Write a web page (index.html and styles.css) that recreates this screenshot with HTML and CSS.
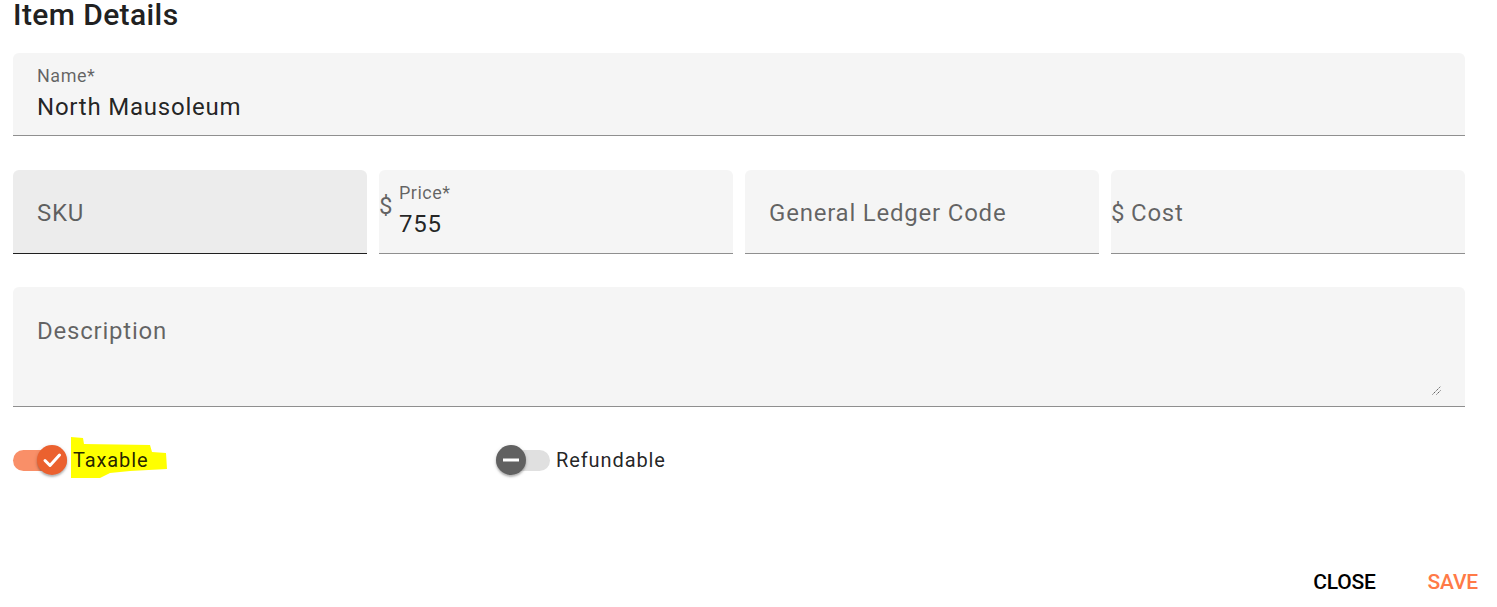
FILE: index.html
```html
<!DOCTYPE html>
<html lang="en">
<head>
<meta charset="utf-8">
<title>Item Details</title>
<link rel="stylesheet" href="styles.css">
</head>
<body>
<div class="dialog">
  <h2 class="title">Item Details</h2>
  <div class="form">
    <div class="field field-name">
      <div class="field-body">
        <div class="label-float">Name*</div>
        <div class="value">North Mausoleum</div>
      </div>
    </div>

    <div class="row4">
      <div class="field field-sku field-hover">
        <div class="field-body">
          <div class="label-rest">SKU</div>
        </div>
      </div>
      <div class="field field-prefixed">
        <span class="prefix prefix-up">$</span>
        <div class="field-body">
          <div class="label-float">Price*</div>
          <div class="value">755</div>
        </div>
      </div>
      <div class="field">
        <div class="field-body">
          <div class="label-rest">General Ledger Code</div>
        </div>
      </div>
      <div class="field field-prefixed">
        <span class="prefix">$</span>
        <div class="field-body">
          <div class="label-rest">Cost</div>
        </div>
      </div>
    </div>

    <div class="field field-desc">
      <div class="field-body">
        <div class="label-rest desc-label">Description</div>
      </div>
      <svg class="grip" width="9" height="9" viewBox="0 0 9 9">
        <path d="M0.5 8.5 L8.5 0.5 M4.5 8.5 L8.5 4.5" stroke="#555" stroke-width="1" stroke-dasharray="1.4 0.8" fill="none"/>
      </svg>
    </div>

    <div class="switches">
      <div class="switch-item">
        <div class="switch switch-on">
          <span class="track"></span>
          <span class="thumb">
            <svg width="30" height="30" viewBox="0 0 30 30">
              <path d="M8 15.5 L13 20.5 L22.5 10" stroke="#fff" stroke-width="3" fill="none" stroke-linecap="round" stroke-linejoin="round"/>
            </svg>
          </span>
        </div>
        <span class="switch-label highlighted">Taxable</span>
      </div>
      <div class="switch-item">
        <div class="switch switch-off">
          <span class="track"></span>
          <span class="thumb">
            <svg width="30" height="30" viewBox="0 0 30 30">
              <path d="M7 15 L23 15" stroke="#fff" stroke-width="3" fill="none"/>
            </svg>
          </span>
        </div>
        <span class="switch-label">Refundable</span>
      </div>
    </div>
  </div>

  <div class="actions">
    <button class="btn btn-close">Close</button>
    <button class="btn btn-save">Save</button>
  </div>
</div>
</body>
</html>
```

FILE: styles.css
```css
html, body {
  margin: 0;
  padding: 0;
  background: #ffffff;
  overflow: hidden;
}

body {
  font-family: Roboto, "Liberation Sans", Arial, sans-serif;
  color: rgba(0, 0, 0, 0.87);
}

.dialog {
  width: 1497px;
  height: 607px;
  display: flex;
  flex-direction: column;
}

.title {
  margin: 0;
  padding-left: 13px;
  font-size: 30px;
  line-height: 29px;
  font-weight: 500;
  letter-spacing: 0.4px;
  color: #212121;
}

.form {
  width: 1452px;
  margin-left: 13px;
  margin-top: 24px;
  display: flex;
  flex-direction: column;
}

.field {
  position: relative;
  box-sizing: border-box;
  background: #f5f5f5;
  border-radius: 6px 6px 0 0;
  border-bottom: 1px solid #8f8f8f;
  display: flex;
  align-items: flex-start;
}

.field-body {
  padding-left: 24px;
  padding-top: 14px;
  display: flex;
  flex-direction: column;
  flex: 1;
  min-width: 0;
}

.field-name {
  height: 83px;
}

.label-float {
  font-size: 18px;
  line-height: 18px;
  color: rgba(0, 0, 0, 0.6);
  letter-spacing: 0.5px;
}

.value {
  margin-top: 10px;
  font-size: 24px;
  line-height: 24px;
  letter-spacing: 0.78px;
  color: rgba(0, 0, 0, 0.87);
}

.label-rest {
  margin-top: 17px;
  font-size: 24px;
  line-height: 24px;
  letter-spacing: 0.78px;
  color: rgba(0, 0, 0, 0.6);
}

.row4 {
  margin-top: 34px;
  display: grid;
  grid-template-columns: repeat(4, 1fr);
  column-gap: 12px;
}

.row4 .field {
  height: 84px;
}

.field-hover {
  background: #ececec;
  border-bottom-color: #1f1f1f;
}

.field-prefixed .field-body {
  padding-left: 0;
}

.prefix {
  width: 20px;
  flex: none;
  font-size: 24px;
  line-height: 24px;
  color: rgba(0, 0, 0, 0.6);
  padding-top: 31px;
}

.prefix-up {
  padding-top: 24px;
}

.field-desc {
  margin-top: 33px;
  height: 120px;
}

.desc-label {
  margin-top: 18px;
}

.grip {
  position: absolute;
  right: 24px;
  bottom: 11px;
}

.switches {
  margin-top: 33px;
  height: 40px;
  display: grid;
  grid-template-columns: 483px 1fr;
  align-items: center;
}

.switch-item {
  display: flex;
  align-items: center;
  gap: 6px;
}

.switch {
  position: relative;
  width: 54px;
  height: 30px;
  flex: none;
}

.track {
  position: absolute;
  left: 0;
  right: 0;
  top: 4.5px;
  height: 21px;
  border-radius: 11px;
}

.thumb {
  position: absolute;
  top: 0;
  width: 30px;
  height: 30px;
  border-radius: 50%;
  box-shadow: 0 2px 2px rgba(0, 0, 0, 0.22), 0 1px 4px rgba(0, 0, 0, 0.14);
  display: flex;
}

.switch-on .track {
  background: #f98f68;
}

.switch-on .thumb {
  right: 0;
  background: #eb612f;
}

.switch-off .track {
  background: #e0e0e0;
}

.switch-off .thumb {
  left: 0;
  background: #616161;
}

.switch-label {
  font-size: 20px;
  line-height: 24px;
  letter-spacing: 0.9px;
  color: rgba(0, 0, 0, 0.87);
}

.highlighted {
  position: relative;
  z-index: 0;
}

.highlighted::before {
  content: "";
  position: absolute;
  left: -3px;
  top: -11px;
  width: 97px;
  height: 41px;
  background: #ffff00;
  z-index: -1;
  clip-path: polygon(1px 0, 13px 1px, 14px 7px, 80px 8px, 82px 15px, 96px 16px, 97px 32px, 60px 34px, 40px 36px, 30px 41px, 1px 41px);
}

.actions {
  margin-top: 84px;
  padding-right: 19px;
  display: flex;
  justify-content: flex-end;
  gap: 52px;
}

.btn {
  border: none;
  background: transparent;
  padding: 0;
  height: 36px;
  font-family: Roboto, "Liberation Sans", Arial, sans-serif;
  font-size: 21px;
  line-height: 36px;
  font-weight: 500;
  letter-spacing: -0.2px;
  text-transform: uppercase;
  cursor: pointer;
}

.btn-close {
  color: #000000;
}

.btn-save {
  color: #ff7a47;
}
```
